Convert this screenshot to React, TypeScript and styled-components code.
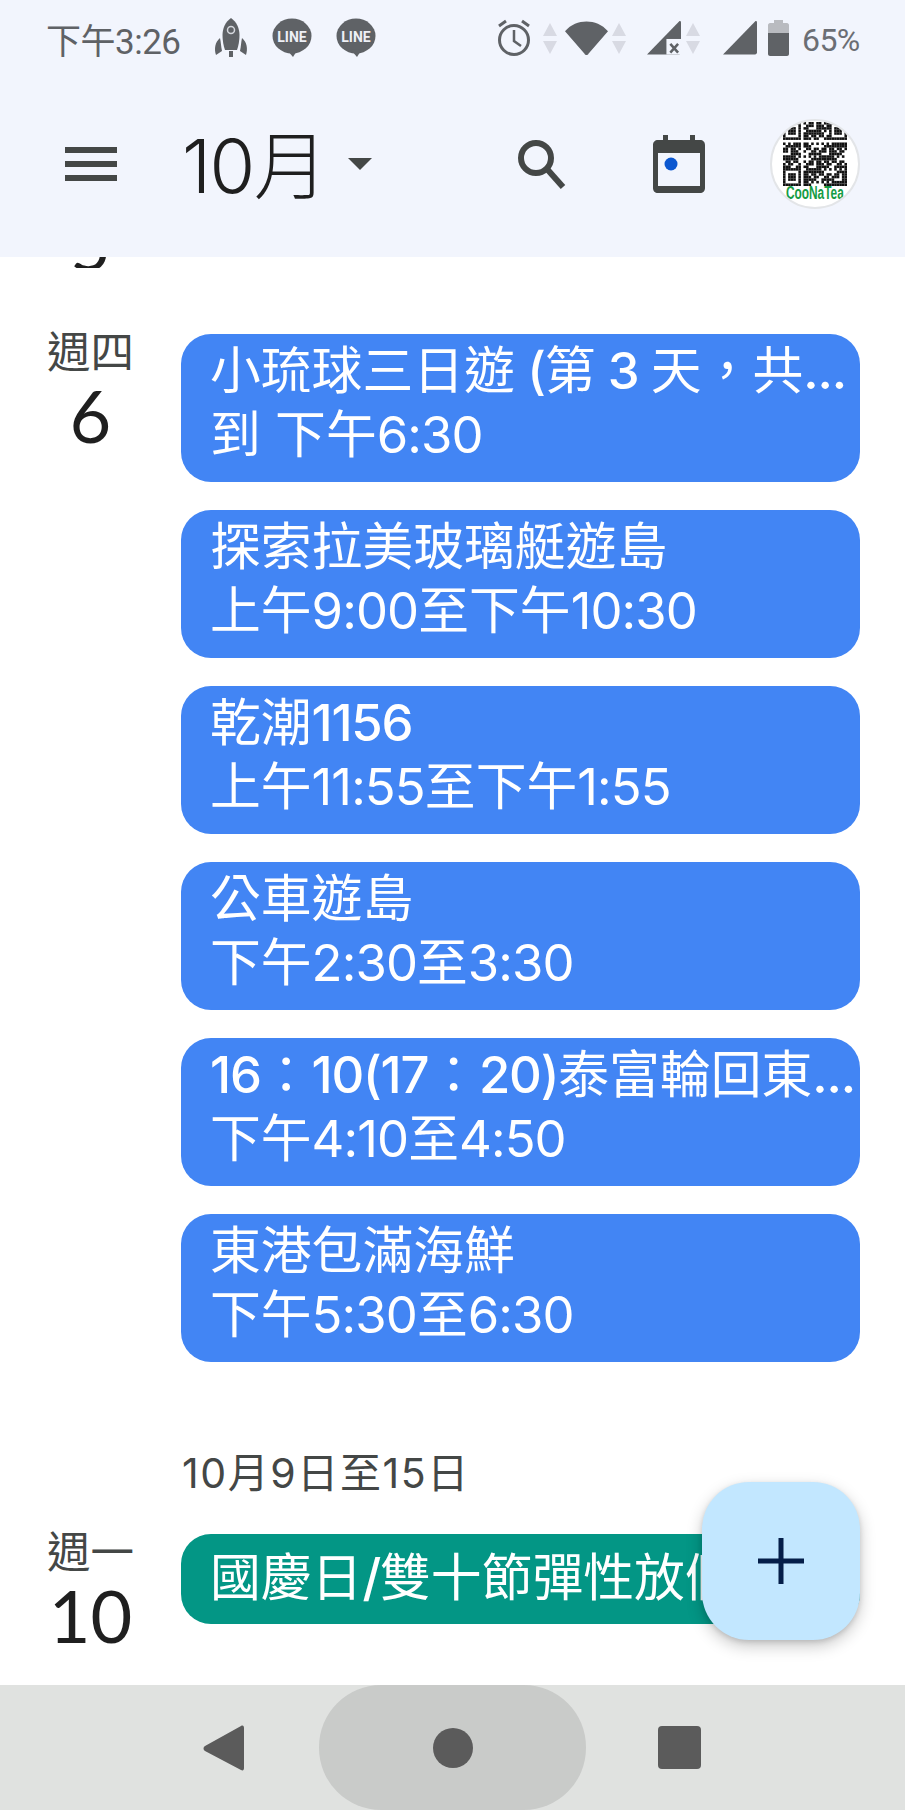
import React from "react";
import styled, { createGlobalStyle } from "styled-components";

const Global = createGlobalStyle`
  html, body { margin: 0; padding: 0; background: #fff; }
  * { box-sizing: border-box; }
`;
const CJK = `"Noto Sans CJK TC", sans-serif`;
const FONT = `Roboto, ${CJK}`;
const EVENT_FONT = `Inter, ${CJK}`;

const Screen = styled.div`
  position: relative; width: 905px; height: 1810px; display: flex; flex-direction: column;
  overflow: hidden; background: #fff; font-family: ${FONT};
`;
const Top = styled.header`
  height: 257px; background: #f2f5fd; display: flex; flex-direction: column; flex: none; position: relative; z-index: 1;
`;
const Status = styled.div`
  height: 76px; display: flex; align-items: center; padding: 0 0 0 46px; color: #606368;
`;
const Clock = styled.span`
  font-size: 35px; width: 168px; letter-spacing: -0.5px; color: #5f6266; white-space: nowrap;
`;
const StatusLeft = styled.div`
  display: flex; align-items: center; gap: 24px; width: 282px;
`;
const StatusRight = styled.div`
  display: flex; align-items: center;
`;
const Spacer = styled.span<{ $w: number }>`
  flex: none; width: ${(p) => p.$w}px;
`;
const Percent = styled.span`
  font-size: 32px; color: #6b6e74; margin-left: 13px; letter-spacing: -.6px; padding-top: 3px;
`;
const AppBar = styled.div`
  flex: 1; display: flex; align-items: center; padding: 0 45px 6px 65px;
`;
const Title = styled.div`
  margin-left: 65px; font-size: 74px; color: #1f1f1f; font-family: ${EVENT_FONT}; letter-spacing: -1.5px; width: 154px;
  white-space: nowrap; font-weight: 300; line-height: 80px; margin-top: 4px;
`;
const Caret = styled.div`
  width: 0; height: 0; border-left: 12px solid transparent; border-right: 12px solid transparent;
  border-top: 12px solid #444746; margin-left: 12px;
`;
const Actions = styled.div`
  margin-left: auto; display: flex; align-items: center;
`;
const Avatar = styled.div`
  width: 90px; height: 90px; border-radius: 50%; background: #fff; border: 2px solid #e3e5e8; margin-left: 65px;
  display: flex; flex-direction: column; align-items: center; overflow: hidden; padding-top: 1px;
`;
const AvatarLabel = styled.span`
  font-family: "Liberation Sans", sans-serif; font-size: 18px; font-weight: 700; line-height: 14px;
  color: #169c45; white-space: nowrap; transform: scaleX(.66);
`;
const Main = styled.main`
  flex: 1; min-height: 0; overflow: hidden;
`;
const Clipped = styled.div`
  height: 11px; overflow: hidden; margin-bottom: 66px;
`;
const ClippedNum = styled.div`
  font-family: Lato, sans-serif; font-size: 70px; line-height: 70px; color: #1f1f1f; width: 181px; text-align: center;
  margin-top: -48px;
`;
const Day = styled.section`
  display: grid; grid-template-columns: 181px 679px;
`;
const DayHead = styled.div`
  display: flex; flex-direction: column; align-items: center; width: 181px;
`;
const Weekday = styled.div`
  font-size: 43.5px; line-height: 47px; color: #444746; margin-top: -4px;
`;
const DayNum = styled.div`
  font-family: Lato, sans-serif; font-size: 72px; line-height: 77px; color: #1f1f1f;
`;
const Events = styled.div`
  display: flex; flex-direction: column; gap: 28px;
`;
const Event = styled.div<{ $color?: string; $single?: boolean }>`
  height: ${(p) => (p.$single ? 90 : 148)}px;
  background: ${(p) => p.$color || "#4285f4"}; border-radius: 30px;
  color: #fff; padding: ${(p) => (p.$single ? "12px" : "5px")} 0 0 29px; overflow: hidden;
  font-family: ${EVENT_FONT}; font-size: 50.8px; line-height: 64px;
`;
const EventLine = styled.div`
  white-space: nowrap;
`;
const LatinRun = styled.span`
  font-weight: 500; letter-spacing: -1.2px;
`;
const DigitRun = styled.span`
  letter-spacing: -.9px;
`;
const WeekLabel = styled.div`
  margin: 86px 0 0 182px; font-size: 41px; line-height: 50px; color: #444746; font-family: ${EVENT_FONT}; letter-spacing: 1.6px;
`;
const NextDay = styled(Day)`
  margin-top: 36px;
`;
const Fab = styled.button`
  position: absolute; left: 702px; top: 1482px; width: 158px; height: 158px; border: 0; border-radius: 47px;
  background: #c2e7ff; box-shadow: 0 6px 16px rgba(0,0,0,.22), 0 2px 5px rgba(0,0,0,.12);
  display: flex; align-items: center; justify-content: center; padding: 0;
`;
const Nav = styled.nav`
  height: 125px; flex: none; background: #e0e2e0; display: grid; grid-template-columns: 319px 267px 1fr; align-items: center;
`;
const NavLeft = styled.div`
  display: flex; justify-content: flex-end; padding-right: 75px;
`;
const HomePill = styled.div`
  height: 125px; border-radius: 62px; background: #c9cbc9; display: flex; align-items: center; justify-content: center;
`;
const HomeDot = styled.div`
  width: 40px; height: 40px; border-radius: 50%; background: #5b5b5b;
`;
const NavSquare = styled.div`
  width: 43px; height: 43px; border-radius: 4px; background: #5b5b5b; margin-left: 72px;
`;

const G = "#5f6266";
const L = "#d8dae3";

const Rocket = () => (
  <svg width="34" height="40" viewBox="0 0 34 40">
    <path fill={G} d="M17 0c6 4 8.500 11 8.500 17 0 5-1 11-2.500 15H11C9.500 28 8.500 22 8.500 17 8.500 11 11 4 17 0z" />
    <circle cx="17" cy="12" r="3.500" fill="none" stroke="#d6d8de" strokeWidth="1.500" />
    <path fill={G} d="M6 20c1 4 1 9 2 13l-6 4c-2-6-1-13 4-17zM28 20c5 4 6 11 4 17l-6-4c1-4 1-9 2-13zM15 33h4v6h-4z" />
  </svg>
);
const Line = () => (
  <svg width="40" height="40" viewBox="0 0 40 40">
    <ellipse cx="20" cy="18" rx="19.500" ry="17.500" fill={G} />
    <path d="M15 32l6 7 5-8z" fill={G} />
    <text x="20" y="24" textAnchor="middle" fontFamily="Roboto, sans-serif" fontWeight="700" fontSize="14" fill="#eef0f6">LINE</text>
  </svg>
);
const Alarm = () => (
  <svg width="36" height="38" viewBox="0 0 36 38" fill="none" stroke={G}>
    <circle cx="18" cy="21" r="14.500" strokeWidth="3" />
    <path d="M18 11v11l7 5" strokeWidth="2.500" />
    <path d="M3 7l7-5M33 7l-7-5" strokeWidth="3" />
  </svg>
);
const Arrows = () => (
  <svg width="14" height="31" viewBox="0 0 14 31">
    <path d="M7 0l7 13H0zM7 31L0 18h14z" fill={L} />
  </svg>
);
const Wifi = () => (
  <svg width="43" height="36" viewBox="0 0 44 36">
    <path d="M0 11C6 4 14 1 22 1s16 3 22 10L24 34c-1 2-3 2-4 0z" fill={G} />
  </svg>
);
const Signal = ({ x }: { x?: boolean }) => (
  <svg width="34" height="34" viewBox="0 0 35 34">
    <path d="M0 34L33 0c1-1 2 0 2 1v31c0 1-1 2-2 2H2z" fill={G} />
    {x && (
      <>
        <rect x="20" y="18" width="16" height="16" fill="#f2f5fd" />
        <path d="M24 23l8 9M32 23l-8 9" stroke={G} strokeWidth="2.600" />
      </>
    )}
  </svg>
);
const Battery = () => (
  <svg width="21" height="36" viewBox="0 0 21 36">
    <path d="M6 0h9v3h4c1 0 2 1 2 2v8H0V5c0-1 1-2 2-2h4z" fill="#b9bbc0" />
    <path d="M0 13h21v21c0 1-1 2-2 2H2c-1 0-2-1-2-2z" fill={G} />
  </svg>
);
const Menu = () => (
  <svg width="52" height="34" viewBox="0 0 52 34" fill="#444746">
    <rect y="0" width="52" height="6" /><rect y="14" width="52" height="6" /><rect y="28" width="52" height="6" />
  </svg>
);
const Search = () => (
  <svg width="50" height="50" viewBox="0 0 50 50" fill="none" stroke="#444746">
    <circle cx="20" cy="19" r="15" strokeWidth="6" />
    <path d="M31 30l16 18" strokeWidth="6" />
  </svg>
);
const CalendarIcon = () => (
  <svg width="52" height="58" viewBox="0 0 52 58">
    <path fill="#444746" d="M10 0h5v5h22V0h5v5h5c3 0 5 2 5 5v43c0 3-2 5-5 5H5c-3 0-5-2-5-5V10c0-3 2-5 5-5h5z" />
    <rect x="5" y="18" width="42" height="33" fill="#f2f5fd" />
    <circle cx="18" cy="29" r="6.500" fill="#0b57d0" />
  </svg>
);
const Qr = () => {
  const n = 25, s = 2.6;
  const cells: React.ReactNode[] = [];
  const finder = (cx: number, cy: number) => cx >= 0 && cx < 7 && cy >= 0 && cy < 7;
  for (let y = 0; y < n; y++) for (let x = 0; x < n; x++) {
    const inA = finder(x, y), inB = finder(x - 18, y), inC = finder(x, y - 18);
    let on: boolean;
    if (inA || inB || inC) {
      const ox = inB ? x - 18 : x, oy = inC ? y - 18 : y;
      const edge = ox === 0 || ox === 6 || oy === 0 || oy === 6;
      const core = ox >= 2 && ox <= 4 && oy >= 2 && oy <= 4;
      on = edge || core;
    } else if (x === 7 || y === 7) on = false;
    else on = ((x * 7 + y * 13 + (x * y) % 5) % 3) !== 0;
    if (on) cells.push(<rect key={x + "-" + y} x={x * s} y={y * s} width={s} height={s} />);
  }
  return <svg width="64" height="64" viewBox="0 0 65 65" fill="#111">{cells}</svg>;
};
const Back = () => (
  <svg width="41" height="46" viewBox="0 0 41 46">
    <path d="M38 1c2-1 3 0 3 2v40c0 2-1 3-3 2L2 26c-2-1-2-4 0-5z" fill="#5b5b5b" />
  </svg>
);
const Plus = () => (
  <svg width="46" height="46" viewBox="0 0 46 46" fill="#041e49">
    <rect x="20.500" y="0" width="5" height="46" /><rect x="0" y="20.500" width="46" height="5" />
  </svg>
);

const EventTitle = ({ text }: { text: string }) => (
  <EventLine>
    {text.split(/([\x20-\x7e]+)/).map((part, i) =>
      /[\x21-\x7e]/.test(part) ? <LatinRun key={i}>{part}</LatinRun> : <React.Fragment key={i}>{part}</React.Fragment>
    )}
  </EventLine>
);
const EventTime = ({ text }: { text: string }) => (
  <EventLine>
    {text.split(/([0-9:]+)/).map((part, i) =>
      /[0-9]/.test(part) ? <DigitRun key={i}>{part}</DigitRun> : <React.Fragment key={i}>{part}</React.Fragment>
    )}
  </EventLine>
);

const events = [
  ["小琉球三日遊 (第 3 天，共...", "到 下午6:30"],
  ["探索拉美玻璃艇遊島", "上午9:00至下午10:30"],
  ["乾潮1156", "上午11:55至下午1:55"],
  ["公車遊島", "下午2:30至3:30"],
  ["16：10(17：20)泰富輪回東...", "下午4:10至4:50"],
  ["東港包滿海鮮", "下午5:30至6:30"],
];

export default function App() {
  return (
    <Screen>
      <Global />
      <Top>
        <Status>
          <Clock>下午3:26</Clock>
          <StatusLeft>
            <Rocket /><Line /><Line />
          </StatusLeft>
          <StatusRight>
            <Alarm />
            <Spacer $w={11} /><Arrows />
            <Spacer $w={8} /><Wifi />
            <Spacer $w={4} /><Arrows />
            <Spacer $w={21} /><Signal x />
            <Spacer $w={5} /><Arrows />
            <Spacer $w={23} /><Signal />
            <Spacer $w={11} /><Battery />
            <Percent>65%</Percent>
          </StatusRight>
        </Status>
        <AppBar>
          <Menu />
          <Title>10月</Title>
          <Caret />
          <Actions>
            <Search />
            <Spacer $w={87} />
            <CalendarIcon />
            <Avatar>
              <Qr />
              <AvatarLabel>CooNaTea</AvatarLabel>
            </Avatar>
          </Actions>
        </AppBar>
      </Top>
      <Main>
        <Clipped><ClippedNum>5</ClippedNum></Clipped>
        <Day>
          <DayHead>
            <Weekday>週四</Weekday>
            <DayNum>6</DayNum>
          </DayHead>
          <Events>
            {events.map(([t, s]) => (
              <Event key={t}>
                <EventTitle text={t} />
                <EventTime text={s} />
              </Event>
            ))}
          </Events>
        </Day>
        <WeekLabel>10月9日至15日</WeekLabel>
        <NextDay>
          <DayHead>
            <Weekday>週一</Weekday>
            <DayNum>10</DayNum>
          </DayHead>
          <Events>
            <Event $single $color="#039685">
              <EventTitle text="國慶日/雙十節彈性放假" />
            </Event>
          </Events>
        </NextDay>
      </Main>
      <Fab aria-label="新增"><Plus /></Fab>
      <Nav>
        <NavLeft><Back /></NavLeft>
        <HomePill><HomeDot /></HomePill>
        <NavSquare />
      </Nav>
    </Screen>
  );
}
